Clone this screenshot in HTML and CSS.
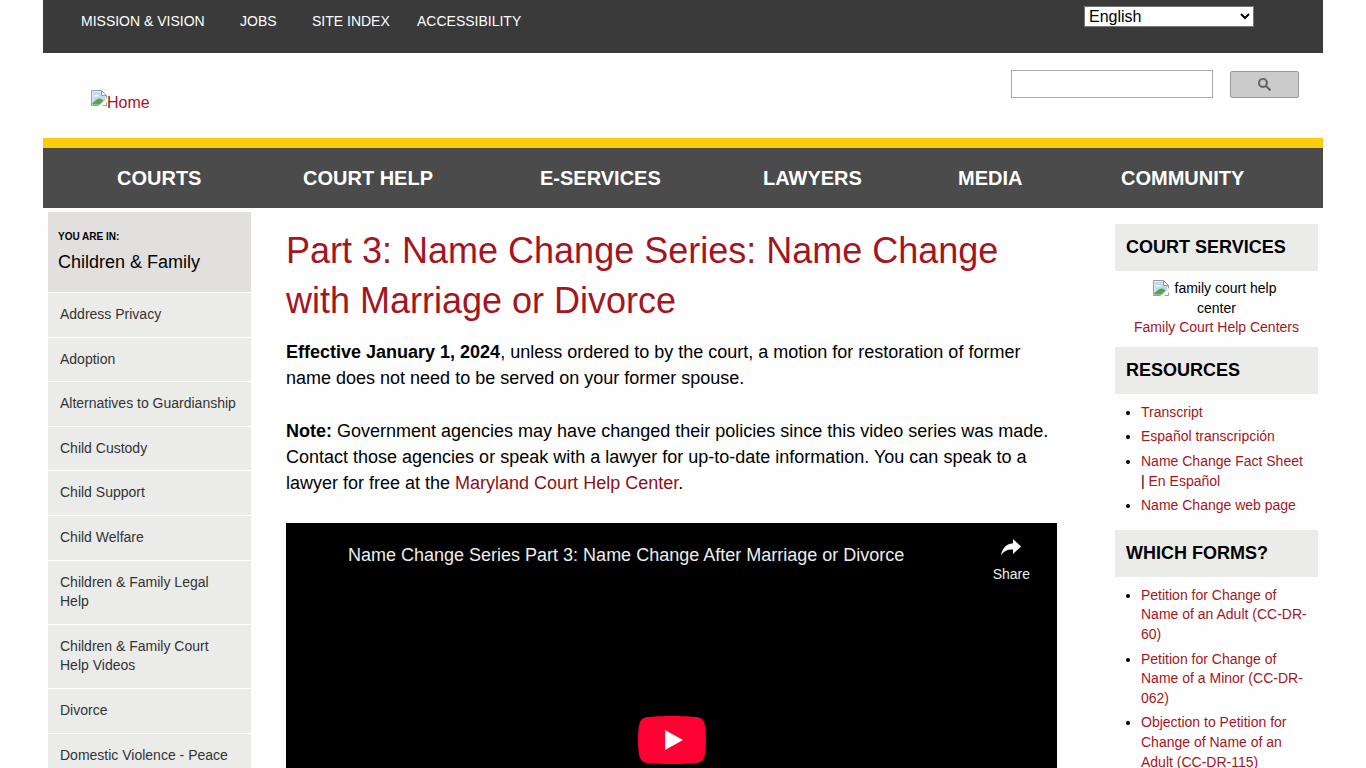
FILE: index.html
```html
<!DOCTYPE html>
<html lang="en">
<head>
    <meta charset="utf-8">
    <title>Part 3: Name Change Series: Name Change with Marriage or Divorce</title>
    <link rel="stylesheet" href="styles.css">
</head>
<body>
    <!-- broken image icon, used for the logo and the help center picture -->
    <svg class="symbols" aria-hidden="true">
        <symbol id="noimage" viewBox="0 0 16 16">
            <path d="M0.5 0.5h10l5 5v10h-15z" fill="#fff"/>
            <path d="M1.500 1.500h9v4h4v6l-4 4h-9z" fill="#c3d9f3"/>
            <path d="M3 6.500a1.500 1.500 0 0 1 2-1.500 2 2 0 0 1 3 1.500z" fill="#fff"/>
            <path d="M1.500 14.500v-2c3-1 4-4 7-4 2 0 3 1 4 2l-4 4z" fill="#56a645"/>
            <path d="M8 16l8-7v2l-5 5z" fill="#fff"/>
            <path d="M7.500 15.500h-7v-15h10l5 5v3M10.500 0.500v5h5M12 15.500h3.500v-3" fill="none" stroke="#9a9a9a"/>
        </symbol>
    </svg>

    <div class="page">
        <!-- Top bar -->
        <div class="topbar">
            <ul class="top-links">
                <li><a href="#">MISSION &amp; VISION</a></li>
                <li><a href="#">JOBS</a></li>
                <li><a href="#">SITE INDEX</a></li>
                <li><a href="#">ACCESSIBILITY</a></li>
            </ul>
            <select class="language" aria-label="Language">
                <option>English</option>
                <option>Español</option>
            </select>
        </div>

        <!-- Logo and search -->
        <header class="header">
            <a href="#" class="logo"><svg class="noimage"><use href="#noimage"/></svg>Home</a>
            <form class="search">
                <input type="text" aria-label="Search">
                <button type="submit" aria-label="Search">
                    <svg width="13" height="13" viewBox="0 0 13 13"><path d="M9.300 8.200h-.6l-.2-.2a4.700 4.700 0 1 0-.5.5l.2.2v.6l3.600 3.600 1.100-1.100zM4.900 8.200a3.300 3.300 0 1 1 0-6.600 3.300 3.300 0 0 1 0 6.600z" fill="#555" stroke="#555" stroke-width="0.4"/></svg>
                </button>
            </form>
        </header>

        <nav class="main-nav">
            <a href="#">COURTS</a>
            <a href="#">COURT HELP</a>
            <a href="#">E-SERVICES</a>
            <a href="#">LAWYERS</a>
            <a href="#">MEDIA</a>
            <a href="#">COMMUNITY</a>
        </nav>

        <div class="columns">
            <!-- Left menu -->
            <nav class="sidebar">
                <div class="you-are-in">
                    <strong>YOU ARE IN:</strong>
                    <span>Children &amp; Family</span>
                </div>
                <ul>
                    <li><a href="#">Address Privacy</a></li>
                    <li><a href="#">Adoption</a></li>
                    <li><a href="#">Alternatives to Guardianship</a></li>
                    <li><a href="#">Child Custody</a></li>
                    <li><a href="#">Child Support</a></li>
                    <li><a href="#">Child Welfare</a></li>
                    <li><a href="#">Children &amp; Family Legal Help</a></li>
                    <li><a href="#">Children &amp; Family Court Help Videos</a></li>
                    <li><a href="#">Divorce</a></li>
                    <li><a href="#">Domestic Violence - Peace</a></li>
                </ul>
            </nav>

            <main class="content">
                <h1>Part 3: Name Change Series: Name Change with Marriage or Divorce</h1>
                <p><strong>Effective January 1, 2024</strong>, unless ordered to by the court, a motion for restoration of former name does not need to be served on your former spouse.</p>
                <p><strong>Note:</strong> Government agencies may have changed their policies since this video series was made. Contact those agencies or speak with a lawyer for up-to-date information. You can speak to a lawyer for free at the <a href="#">Maryland Court Help Center</a>.</p>

                <!-- Video player -->
                <div class="video">
                    <div class="video-top">
                        <a href="#" class="video-title">Name Change Series Part 3: Name Change After Marriage or Divorce</a>
                        <button type="button" class="share">
                            <svg width="20" height="17" viewBox="0 0 20 17"><path d="M12 0l8 7.500-8 7.500v-4.500C6.500 10.300 2.600 12 0 16.500 1 10 4.500 5 12 4.300z" fill="#fff"/></svg>
                            Share
                        </button>
                    </div>
                    <button type="button" class="play" aria-label="Play">
                        <svg width="68" height="48" viewBox="0 0 68 48">
                            <path d="M66.520 7.740c-.78-2.930-2.490-5.410-5.420-6.190C55.790.13 34 0 34 0S12.210.13 6.900 1.550C3.970 2.330 2.270 4.810 1.480 7.740.06 13.050 0 24 0 24s.06 10.950 1.480 16.260c.78 2.930 2.490 5.410 5.420 6.190C12.210 47.870 34 48 34 48s21.790-.13 27.100-1.550c2.930-.78 4.640-3.260 5.420-6.190C67.940 34.950 68 24 68 24s-.06-10.950-1.480-16.260z" fill="#f03"/>
                            <path d="M45 24L27 14v20z" fill="#fff"/>
                        </svg>
                    </button>
                </div>
            </main>

            <!-- Right column -->
            <aside class="services">
                <h2>COURT SERVICES</h2>
                <p class="help-center">
                    <svg class="noimage"><use href="#noimage"/></svg> family court help&nbsp;<br>
                    center<br>
                    <a href="#">Family Court Help Centers</a>
                </p>

                <h2>RESOURCES</h2>
                <ul>
                    <li><a href="#">Transcript</a></li>
                    <li><a href="#">Español transcripción</a></li>
                    <li><a href="#">Name Change Fact Sheet</a> | <a href="#">En Español</a></li>
                    <li><a href="#">Name Change web page</a></li>
                </ul>

                <h2>WHICH FORMS?</h2>
                <ul>
                    <li><a href="#">Petition for Change of Name of an Adult (CC-DR-60)</a></li>
                    <li><a href="#">Petition for Change of Name of a Minor (CC-DR-062)</a></li>
                    <li><a href="#">Objection to Petition for Change of Name of an Adult (CC-DR-115)</a></li>
                </ul>
            </aside>
        </div>
    </div>
</body>
</html>
```
FILE: styles.css
```css
* {
    box-sizing: border-box;
}

body {
    margin: 0;
    background-color: #fefefe;
    color: #000;
    font-family: "Liberation Sans", Arial, sans-serif;
    font-size: 14px;
    line-height: 1.4;
}

a {
    color: #a3161f;
    text-decoration: none;
}

ul {
    margin: 0;
    padding: 0;
}

.symbols {
    display: none;
}

.noimage {
    width: 16px;
    height: 16px;
}

.page {
    max-width: 1280px;
    margin: 0 auto;
}

/* Top bar */
.topbar {
    display: flex;
    justify-content: space-between;
    align-items: flex-start;
    min-height: 53px;
    padding: 6px 69px 0 38px;
    background-color: #3a3a3a;
}

.top-links {
    display: grid;
    grid-template-columns: 159px 72px 105px auto;
    padding-top: 6px;
    list-style: none;
}

.top-links a {
    color: #fff;
}

.language {
    width: 170px;
    height: 21px;
    border: 1px solid #767676;
    background-color: #fff;
    color: #000;
    font-family: inherit;
    font-size: 16px;
}

/* Logo and search */
.header {
    display: flex;
    justify-content: space-between;
    align-items: flex-start;
    min-height: 85px;
    padding: 17px 24px 0 48px;
}

.logo {
    display: flex;
    padding-top: 20px;
    font-size: 16px;
    line-height: 26px;
}

.search {
    display: flex;
    align-items: center;
    gap: 17px;
}

.search input {
    width: 202px;
    height: 28px;
    border: 1px solid #aaa;
    background-color: #fff;
}

.search button {
    display: flex;
    align-items: center;
    justify-content: center;
    width: 69px;
    height: 27px;
    border: 1px solid #999;
    border-radius: 2px;
    background-color: #cbcbcb;
}

/* Main navigation */
.main-nav {
    display: grid;
    grid-template-columns: 186fr 237fr 223fr 195fr 163fr 202fr;
    padding: 15px 0 15px 74px;
    border-top: 10px solid #f9cd0b;
    background-color: #4b4b4b;
}

.main-nav a {
    color: #fff;
    font-size: 20px;
    font-weight: bold;
    line-height: 30px;
}

.columns {
    display: grid;
    grid-template-columns: 203px 1fr 203px;
    align-items: start;
    padding: 4px 5px 0;
}

/* Left menu */
.sidebar ul {
    list-style: none;
}

.you-are-in {
    padding: 17px 10px 16px;
    background-color: #e2e0df;
}

.you-are-in strong {
    display: block;
    margin-bottom: 4px;
    font-size: 10px;
    line-height: 16px;
}

.you-are-in span {
    display: block;
    font-size: 18px;
    line-height: 27px;
}

.sidebar li {
    border-top: 1px solid #fff;
}

.sidebar li a {
    display: block;
    padding: 12px;
    background-color: #ebebe9;
    color: #333;
}

/* Page content */
.content {
    padding: 14px 58px 0 35px;
}

.content h1 {
    margin: 0 0 13px;
    color: #a3161f;
    font-size: 36px;
    font-weight: normal;
    line-height: 50px;
}

.content p {
    margin: 0 0 27px;
    font-size: 18px;
    line-height: 26px;
}

.content p a {
    color: #8a1018;
}

/* Video player */
.video {
    position: relative;
    aspect-ratio: 16 / 9;
    background-color: #000;
}

.video-top {
    display: flex;
    justify-content: space-between;
    align-items: flex-start;
    padding: 16px 27px 0 62px;
}

.video-title {
    color: #eee;
    font-size: 18px;
    line-height: 32px;
}

.share {
    display: flex;
    flex-direction: column;
    align-items: center;
    gap: 10px;
    padding: 0;
    border: none;
    background: none;
    color: #eee;
    font-family: inherit;
    font-size: 14px;
    cursor: pointer;
}

.play {
    position: absolute;
    top: 50%;
    left: 50%;
    transform: translate(-50%, -50%);
    padding: 0;
    border: none;
    background: none;
    cursor: pointer;
}

.play svg {
    display: block;
}

/* Right column */
.services {
    padding-top: 12px;
}

.services h2 {
    margin: 0 0 8px;
    padding: 11px;
    background-color: #ebebe9;
    font-size: 18px;
    line-height: 25px;
}

.services ul {
    padding: 1px 10px 9px 26px;
}

.services li {
    margin-bottom: 5px;
}

.help-center {
    margin: 0 0 9px;
    text-align: center;
}

.help-center .noimage {
    margin-right: 2px;
    vertical-align: -3px;
}
```
